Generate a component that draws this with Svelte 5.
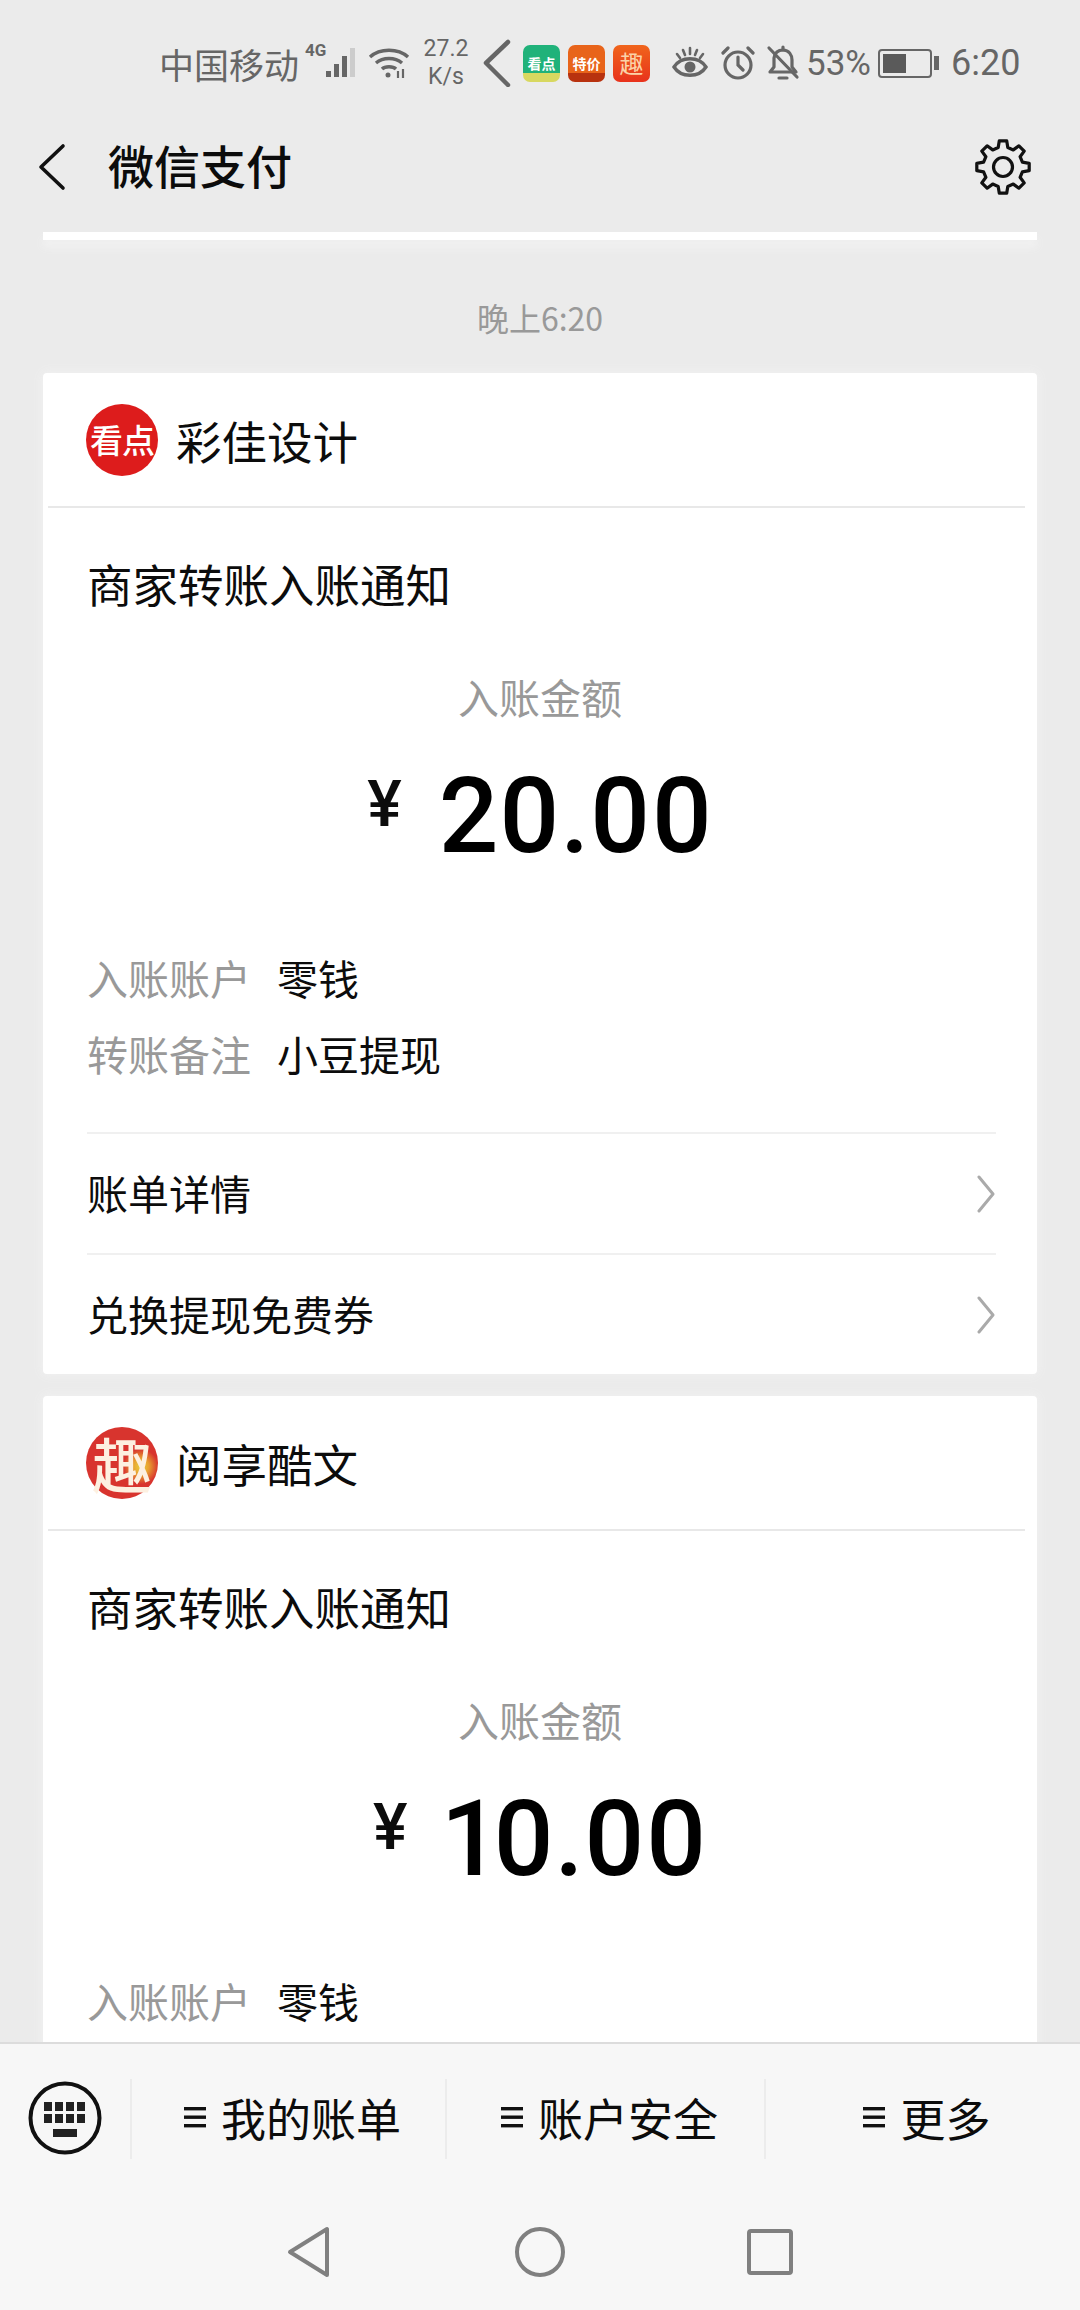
<script>
  const cards = [
    { name: "彩佳设计", logo: "看点", logoClass: "logo-kd", amount: "20.00", full: true },
    { name: "阅享酷文", logo: "趣", logoClass: "logo-qu", amount: "10.00", full: false },
  ];

  const menus = ["我的账单", "账户安全", "更多"];

  // 8 teeth gear outline
  function gearPath(cx, cy, ro, ri) {
    const pts = [];
    for (let i = 0; i < 8; i++) {
      const a = (i * Math.PI) / 4 - Math.PI / 2;
      const step = Math.PI / 8;
      const list = [
        [ri, a - step * 0.62],
        [ro, a - step * 0.36],
        [ro, a + step * 0.36],
        [ri, a + step * 0.62],
      ];
      for (const [r, t] of list) {
        pts.push(`${(cx + r * Math.cos(t)).toFixed(1)} ${(cy + r * Math.sin(t)).toFixed(1)}`);
      }
    }
    return "M" + pts.join("L") + "Z";
  }
</script>

<div class="page">
  <!-- Status bar -->
  <div class="status">
    <span class="carrier">中国移动</span>
    <span class="net">4G</span>
    <svg class="signal" width="34" height="32" viewBox="0 0 34 32">
      <rect x="1" y="24" width="5" height="6" fill="#666" />
      <rect x="9" y="17" width="5" height="13" fill="#666" />
      <rect x="17" y="9" width="5" height="21" fill="#666" />
      <rect x="25" y="1" width="5" height="29" fill="#ccc" />
    </svg>
    <svg class="wifi" width="42" height="32" viewBox="0 0 42 32" fill="none" stroke="#666" stroke-width="3.4">
      <path d="M2 10 C12 1 30 1 40 10" />
      <path d="M8 16 C15 10 27 10 34 16" />
      <path d="M14 22 C17 19 25 19 28 22" />
      <circle cx="20" cy="28" r="2.5" fill="#666" stroke="none" />
      <path d="M30 24 v7 M35 22 v9" stroke-width="2.2" />
    </svg>
    <span class="speed"><span>27.2</span><span>K/s</span></span>
    <svg class="fold" width="28" height="48" viewBox="0 0 28 48" fill="none" stroke="#666" stroke-width="4.5" stroke-linecap="round" stroke-linejoin="round">
      <path d="M25 3 L3 24 L25 46" />
    </svg>
    <span class="app app-green">看点</span>
    <span class="app app-orange">特价</span>
    <span class="app app-red">趣</span>
    <svg class="eye" width="38" height="34" viewBox="0 0 38 34" fill="none" stroke="#666" stroke-width="3.4" stroke-linecap="round">
      <path d="M3 21 C10 10 28 10 35 21 C28 32 10 32 3 21Z" />
      <circle cx="19" cy="21" r="5.5" fill="#666" stroke="none" />
      <path d="M6 8 L9 12 M19 2 V8 M32 8 L29 12 M12 4 L14 9 M26 4 L24 9" stroke-width="2.6" />
    </svg>
    <svg class="alarm" width="36" height="34" viewBox="0 0 36 34" fill="none" stroke="#666" stroke-width="3.2" stroke-linecap="round">
      <circle cx="18" cy="19" r="13" />
      <path d="M18 11 V19 L23 24 M3 7 L8 2 M33 7 L28 2" />
    </svg>
    <svg class="bell" width="34" height="36" viewBox="0 0 34 36" fill="none" stroke="#666" stroke-width="3.2" stroke-linecap="round" stroke-linejoin="round">
      <path d="M8 13 C9 7 13 5 17 5 C23 5 26 10 26 15 V22 L30 27 H4 L8 22 Z" />
      <path d="M17 2 V5 M13 33 H21" />
      <path d="M3 3 L31 32" />
    </svg>
    <span class="percent">53%</span>
    <div class="battery"><div class="battery-fill" style="width: 53%"></div></div>
    <span class="nub"></span>
    <span class="clock">6:20</span>
  </div>

  <!-- Header -->
  <div class="header">
    <svg class="back" width="30" height="48" viewBox="0 0 30 48" fill="none" stroke="#111" stroke-width="3.6" stroke-linecap="round" stroke-linejoin="round">
      <path d="M26 3 L4 24 L26 45" />
    </svg>
    <span class="title">微信支付</span>
    <svg class="gear" width="60" height="60" viewBox="0 0 60 60" fill="none" stroke="#111" stroke-width="3.2" stroke-linejoin="round">
      <path d={gearPath(30, 30, 26.5, 20)} />
      <circle cx="30" cy="30" r="9.5" />
    </svg>
  </div>

  <!-- Messages -->
  <div class="messages">
    <div class="sliver"></div>
    <div class="time">晚上6:20</div>

    {#each cards as card}
      <div class="card">
        <div class="card-head">
          <span class="logo {card.logoClass}">{card.logo}</span>
          <span class="card-name">{card.name}</span>
        </div>
        <div class="card-title">商家转账入账通知</div>
        <div class="amount-label">入账金额</div>
        <div class="amount">
          <span class="yen">¥</span>
          <span class="value">{card.amount}</span>
        </div>
        <div class="rows">
          <div class="row"><span class="key">入账账户</span><span>零钱</span></div>
          {#if card.full}
            <div class="row"><span class="key">转账备注</span><span>小豆提现</span></div>
          {/if}
        </div>
        {#if card.full}
          <div class="links">
            {#each ["账单详情", "兑换提现免费券"] as link}
              <div class="link">
                <span class="link-text">{link}</span>
                <svg width="20" height="38" viewBox="0 0 20 38" fill="none" stroke="#aaa" stroke-width="3" stroke-linecap="round" stroke-linejoin="round">
                  <path d="M3 2 L17 19 L3 36" />
                </svg>
              </div>
            {/each}
          </div>
        {:else}
          <div class="card-rest"></div>
        {/if}
      </div>
    {/each}
  </div>

  <!-- Bottom panel -->
  <div class="panel">
    <div class="menu">
      <div class="kbd-cell">
        <svg width="74" height="74" viewBox="0 0 74 74" fill="none">
          <circle cx="37" cy="37" r="34.5" stroke="#111" stroke-width="4" />
          {#each [0, 1] as r}
            {#each [0, 1, 2, 3] as c}
              <rect x={16 + c * 11} y={21 + r * 12} width="8" height="9" fill="#222" />
            {/each}
          {/each}
          <rect x="25" y="48" width="24" height="8" fill="#222" />
        </svg>
      </div>
      {#each menus as menu}
        <div class="menu-item">
          <svg width="22" height="22" viewBox="0 0 22 22" fill="#111">
            <rect y="1" width="22" height="3.4" />
            <rect y="9.5" width="22" height="3.4" />
            <rect y="18" width="22" height="3.4" />
          </svg>
          <span>{menu}</span>
        </div>
      {/each}
    </div>
    <div class="nav">
      <svg width="48" height="52" viewBox="0 0 48 52" fill="none" stroke="#808080" stroke-width="4" stroke-linejoin="round">
        <path d="M42 3 V49 L5 26 Z" />
      </svg>
      <svg width="52" height="52" viewBox="0 0 52 52" fill="none" stroke="#808080" stroke-width="4">
        <circle cx="26" cy="26" r="23" />
      </svg>
      <svg width="48" height="48" viewBox="0 0 48 48" fill="none" stroke="#808080" stroke-width="4" stroke-linejoin="round">
        <rect x="3" y="3" width="42" height="42" rx="2" />
      </svg>
    </div>
  </div>
</div>

<style>
  :global(body) {
    margin: 0;
    background: #ebebeb;
  }

  .page {
    display: flex;
    flex-direction: column;
    width: 1080px;
    height: 2310px;
    overflow: hidden;
    background: #ebebeb;
    color: #0c0c0c;
    font-family: "Noto Sans CJK SC", "Noto Sans", sans-serif;
  }

  /* status bar */
  .status {
    display: flex;
    align-items: center;
    flex: none;
    height: 126px;
    box-sizing: border-box;
    padding-left: 159px;
    color: #666;
    font-size: 35px;
  }

  .carrier {
    width: 146px;
    white-space: nowrap;
  }

  .net {
    width: 20px;
    margin-bottom: 26px;
    font-family: Roboto, sans-serif;
    font-size: 17px;
    font-weight: 700;
  }

  .signal { margin-right: 9px; }
  .wifi { margin-right: 12px; }

  .speed {
    display: flex;
    flex-direction: column;
    align-items: center;
    width: 48px;
    margin-right: 13px;
    font-family: Roboto, sans-serif;
    font-size: 23px;
    line-height: 28px;
  }

  .fold { margin-right: 12px; }

  .app {
    display: flex;
    align-items: center;
    justify-content: center;
    width: 37px;
    height: 37px;
    margin-right: 8px;
    border-radius: 7px;
    color: #fff;
    font-size: 14px;
    font-weight: 700;
    line-height: 1;
    white-space: nowrap;
  }

  .app-green { background: linear-gradient(#20b27a 75%, #d8d860 75%); }
  .app-orange { background: linear-gradient(#e8641a 75%, #b8320f 75%); }
  .app-red {
    background: linear-gradient(#f0651c, #e8321c);
    margin-right: 21px;
    font-size: 24px;
    font-weight: 400;
    color: #fbd2a8;
  }

  .eye { margin-right: 11px; }
  .alarm { margin-right: 10px; }
  .bell { margin-right: 6px; }

  .percent {
    width: 72px;
    font-family: Roboto, sans-serif;
    font-size: 35px;
  }

  .battery {
    box-sizing: border-box;
    width: 54px;
    height: 29px;
    padding: 3px;
    border: 2px solid #666;
    border-radius: 4px;
  }

  .battery-fill {
    height: 100%;
    background: #5a5a5a;
  }

  .nub {
    width: 5px;
    height: 14px;
    margin-left: 2px;
    margin-right: 12px;
    background: #666;
  }

  .clock {
    font-family: Roboto, sans-serif;
    font-size: 36px;
  }

  /* header */
  .header {
    display: flex;
    align-items: center;
    flex: none;
    height: 82px;
    box-sizing: border-box;
    padding-left: 37px;
    padding-right: 47px;
  }

  .title {
    margin-left: 41px;
    margin-bottom: 6px;
    font-size: 46px;
    font-weight: 500;
    line-height: 1;
  }

  .gear { margin-left: auto; }

  /* messages */
  .messages {
    flex: 1;
    min-height: 0;
    overflow: hidden;
    padding: 24px 43px 0;
  }

  .sliver {
    height: 8px;
    background: #fff;
    box-shadow: 0 7px 8px #f3f3f3;
  }

  .time {
    margin-top: 55px;
    margin-bottom: 34px;
    color: #999;
    font-size: 32px;
    line-height: 44px;
    text-align: center;
  }

  .card {
    margin-bottom: 22px;
    background: #fff;
    border-radius: 4px;
    box-shadow: 0 0 12px #f3f3f3;
  }

  .card-head {
    display: flex;
    align-items: center;
    height: 133px;
    margin: 0 12px 0 5px;
    padding-left: 38px;
    border-bottom: 2px solid #e8e8e8;
    box-sizing: content-box;
  }

  .logo {
    display: flex;
    align-items: center;
    justify-content: center;
    width: 72px;
    height: 72px;
    border-radius: 50%;
    color: #fff;
    font-weight: 500;
    line-height: 1;
    white-space: nowrap;
  }

  .logo-kd {
    background: #dd1c1c;
    font-size: 33px;
    letter-spacing: -1px;
  }

  .logo-qu {
    background: radial-gradient(circle at 76% 55%, #e8d040 0, #e8a030 12%, #d8342e 26%);
    color: #fdf0e0;
    font-size: 60px;
  }

  .card-name {
    margin-left: 18px;
    font-size: 45.5px;
    line-height: 60px;
  }

  .card-title {
    margin-top: 45px;
    padding-left: 44px;
    font-size: 45.5px;
    line-height: 60px;
  }

  .amount-label {
    margin-top: 58px;
    color: #999;
    font-size: 41px;
    line-height: 50px;
    text-align: center;
  }

  .amount {
    display: flex;
    justify-content: center;
    gap: 37px;
    height: 120px;
    margin-top: 36px;
    font-variant-numeric: proportional-nums;
  }

  .yen {
    margin-top: 3px;
    font-family: Roboto, sans-serif;
    font-size: 65px;
    font-weight: 500;
    line-height: 88px;
  }

  .value {
    font-family: Roboto, sans-serif;
    font-size: 105px;
    font-weight: 500;
    line-height: 120px;
    color: #000;
  }

  .rows {
    display: flex;
    flex-direction: column;
    gap: 26px;
    margin-top: 75px;
    padding-left: 44px;
  }

  .row {
    display: flex;
    gap: 26px;
    font-size: 41px;
    line-height: 50px;
  }

  .key { color: #999; }

  .links {
    margin: 54px 41px 0 44px;
  }

  .link {
    display: flex;
    align-items: center;
    justify-content: space-between;
    height: 119px;
    box-sizing: content-box;
    border-top: 2px solid #f0f0f0;
    font-size: 41px;
  }

  .link-text { margin-bottom: 4px; }

  .card-rest { height: 60px; }

  /* bottom panel */
  .panel {
    flex: none;
    border-top: 2px solid #dcdcdc;
    background: #f7f7f7;
  }

  .menu {
    display: grid;
    grid-template-columns: 130px 315px 319px 316px;
    align-items: center;
    height: 150px;
  }

  .kbd-cell {
    display: flex;
    justify-content: center;
    margin-bottom: 2px;
  }

  .menu-item {
    display: flex;
    align-items: center;
    justify-content: center;
    gap: 15px;
    height: 80px;
    padding-left: 8px;
    padding-bottom: 4px;
    box-sizing: border-box;
    border-left: 2px solid #ececec;
    font-size: 45px;
    line-height: 1;
  }

  .nav {
    display: flex;
    align-items: center;
    height: 116px;
    padding-left: 285px;
  }

  .nav svg:nth-child(2) { margin-left: 181px; }
  .nav svg:nth-child(3) { margin-left: 180px; }
</style>
